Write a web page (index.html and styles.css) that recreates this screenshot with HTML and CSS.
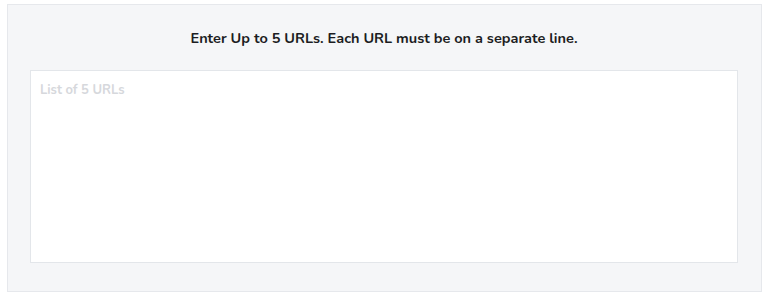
FILE: index.html
```html
<!DOCTYPE html>
<html lang="en">
<head>
<meta charset="utf-8">
<title>URLs</title>
<link rel="stylesheet" href="styles.css">
</head>
<body>
<div class="panel">
  <h2 class="title">Enter Up to 5 URLs. Each URL must be on a separate line.</h2>
  <textarea class="urls" placeholder="List of 5 URLs"></textarea>
</div>
</body>
</html>
```
FILE: styles.css
```css
html, body {
  margin: 0;
  background: #ffffff;
}
body {
  padding: 4px 7px 0 7px;
  font-family: "Nunito", "Lato", "Noto Sans", sans-serif;
}
.panel {
  width: 755px;
  box-sizing: border-box;
  height: 288px;
  background: #f5f6f8;
  border: 1px solid #e6e8ec;
  padding: 23px 23px 28px 22px;
  display: flex;
  flex-direction: column;
}
.title {
  margin: 0 0 22px 0;
  font-size: 14.5px;
  line-height: 20px;
  font-weight: 700;
  color: #1c1d22;
  text-align: center;
}
.urls {
  flex: 1;
  box-sizing: border-box;
  width: 100%;
  resize: none;
  border: 1px solid #e3e6ea;
  background: #ffffff;
  padding: 11px 9px 10px 9px;
  font-family: inherit;
  font-size: 13px;
  line-height: 16px;
  font-weight: 700;
  color: #333;
  outline: none;
}
.urls::placeholder {
  color: #d6d8dc;
  font-weight: 700;
}
```
